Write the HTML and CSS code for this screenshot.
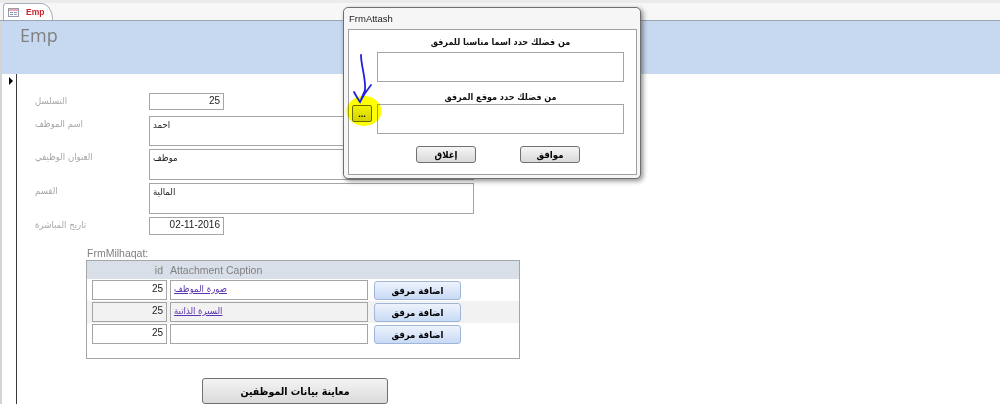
FILE: index.html
```html
<!DOCTYPE html>
<html lang="ar">
<head>
    <meta charset="UTF-8">
    <title>Emp</title>
    <link rel="stylesheet" href="styles.css">
</head>
<body>

    <div class="tabbar">
        <div class="tab">
            <svg class="tab-icon" width="11" height="9" viewBox="0 0 11 9">
                <rect x="0.5" y="0.5" width="10" height="8" fill="#fff" stroke="#9a9aa8"/>
                <rect x="1" y="1" width="9" height="2" fill="#e7a9b8"/>
                <path d="M2 4.5h3M2 6.5h3M6 4.5h3M6 6.5h3" stroke="#8a9ab0"/>
            </svg>
            Emp
        </div>
    </div>

    <div class="frame">
        <div class="form-header">Emp</div>

        <div class="detail">
            <div class="selector"><span class="current"></span></div>

            <div class="content">
                <div class="rows">
                    <div class="row first">
                        <div class="lbl">التسلسل</div>
                        <div class="box num h17">25</div>
                    </div>
                    <div class="row">
                        <div class="lbl">اسم الموظف</div>
                        <div class="box wide h30">احمد</div>
                    </div>
                    <div class="row">
                        <div class="lbl">العنوان الوظيفي</div>
                        <div class="box wide h31">موظف</div>
                    </div>
                    <div class="row">
                        <div class="lbl">القسم</div>
                        <div class="box wide h31">المالية</div>
                    </div>
                    <div class="row">
                        <div class="lbl">تاريخ المباشرة</div>
                        <div class="box num h18">02-11-2016</div>
                    </div>
                </div>

                <div class="sub-label">FrmMilhaqat:</div>
                <div class="subform">
                    <div class="sub-head">
                        <div class="col-id">id</div>
                        <div class="col-cap">Attachment Caption</div>
                    </div>
                    <div class="sub-row">
                        <div class="cell col-id">25</div>
                        <div class="cell col-cap"><a href="#">صورة الموظف</a></div>
                        <button class="add-btn">اضافة مرفق</button>
                    </div>
                    <div class="sub-row alt">
                        <div class="cell col-id">25</div>
                        <div class="cell col-cap"><a href="#">السيرة الذاتية</a></div>
                        <button class="add-btn">اضافة مرفق</button>
                    </div>
                    <div class="sub-row">
                        <div class="cell col-id">25</div>
                        <div class="cell col-cap"></div>
                        <button class="add-btn">اضافة مرفق</button>
                    </div>
                </div>

                <button class="preview-btn">معاينة بيانات الموظفين</button>
            </div>
        </div>
    </div>

    <!-- popup window -->
    <div class="dialog">
        <div class="dialog-title">FrmAttash</div>
        <div class="dialog-client">
            <div class="dlg-label">من فضلك حدد اسما مناسبا للمرفق</div>
            <div class="dlg-box"></div>
            <div class="dlg-label second">من فضلك حدد موقع المرفق</div>
            <button class="browse-btn">...</button>
            <div class="dlg-box flush"></div>
            <div class="dlg-buttons">
                <button class="dlg-btn">إغلاق</button>
                <button class="dlg-btn">موافق</button>
            </div>
        </div>
        <svg class="marker" width="60" height="130" viewBox="0 0 60 130">
            <ellipse cx="20" cy="103" rx="17.5" ry="15" fill="#ffff00"/>
            <path d="M17 47C17 58 22 70 21 82L16 94M10 84C12 88 14 91 16 94C19 88 23 82 27 77" fill="none" stroke="#2020e0" stroke-width="1.8" stroke-linecap="round"/>
        </svg>
    </div>

</body>
</html>
```

FILE: styles.css
```css
body {
    margin: 0;
    padding: 0;
    font-family: "Liberation Sans", Arial, sans-serif;
    background: #fff;
    height: 404px;
    overflow: hidden;
    position: relative;
}
.tabbar {
    height: 17px;
    border-top: 3px solid #ebebeb;
    border-bottom: 1px solid #9aa5b4;
    background: #f7f7f7;
    padding-left: 3px;
    display: flex;
    align-items: flex-end;
}
.tab {
    width: 44px;
    height: 16px;
    background: #fff;
    border: 1px solid #a9b1bc;
    border-bottom: 0;
    border-radius: 3px 12px 0 0 / 3px 16px 0 0;
    display: flex;
    align-items: center;
    gap: 7px;
    padding-left: 4px;
    font-size: 8.5px;
    font-weight: bold;
    color: #c4262e;
}
.frame {
    border-left: 2px solid #d4d4d4;
}
.form-header {
    height: 51px;
    padding: 2px 0 0 18px;
    background: #c6d9f0;
    font-family: "Open Sans", sans-serif;
    font-size: 18px;
    color: #7f7f7f;
}
.detail {
    display: flex;
    height: 330px;
}
.selector {
    width: 14px;
    border-right: 1px solid #3a3a3a;
}
.current {
    display: block;
    width: 0;
    height: 0;
    margin: 3px 0 0 7px;
    border-left: 4px solid #000;
    border-top: 4px solid transparent;
    border-bottom: 4px solid transparent;
}
.content {
    padding: 19px 0 0 18px;
}
.rows {
    display: flex;
    flex-direction: column;
    gap: 3px;
}
.row {
    display: flex;
}
.row.first {
    margin-bottom: 3px;
}
.lbl {
    width: 114px;
    padding-top: 2px;
    font-family: "DejaVu Sans Condensed", "DejaVu Sans", sans-serif;
    font-size: 9.5px;
    color: #a8a8a8;
}
.box {
    box-sizing: border-box;
    border: 1px solid #a5a5a5;
    padding: 1px 3px;
    font-size: 10px;
    color: #222;
    font-family: "Liberation Sans", "DejaVu Sans", sans-serif;
}
.box.num {
    width: 75px;
    text-align: right;
}
.box.wide {
    width: 325px;
    font-family: "DejaVu Sans Condensed", "DejaVu Sans", sans-serif;
    font-size: 9.5px;
    padding-top: 2px;
}
.h17 { height: 17px; }
.h18 { height: 18px; }
.h30 { height: 30px; }
.h31 { height: 31px; }

.sub-label {
    margin: 12px 0 0 52px;
    font-size: 10.5px;
    color: #7f7f7f;
    line-height: 13px;
}
.subform {
    box-sizing: border-box;
    width: 434px;
    height: 99px;
    margin: 0 0 0 51px;
    border: 1px solid #a6a6a6;
}
.sub-head {
    height: 18px;
    background: #d9dfe8;
    display: flex;
    align-items: center;
    padding-left: 5px;
    gap: 3px;
    font-size: 10.5px;
    color: #808080;
}
.sub-head .col-id {
    text-align: right;
    padding-right: 4px;
    box-sizing: border-box;
}
.col-id {
    width: 75px;
}
.col-cap {
    width: 198px;
}
.sub-row {
    height: 22px;
    display: flex;
    align-items: center;
    padding-left: 5px;
    gap: 3px;
}
.sub-row.alt {
    background: #f2f2f2;
}
.cell {
    box-sizing: border-box;
    height: 20px;
    border: 1px solid #a5a5a5;
    background: #fff;
    padding: 2px 3px;
    font-size: 10px;
    color: #222;
}
.sub-row.alt .cell {
    background: #f2f2f2;
}
.cell.col-id {
    text-align: right;
}
.cell a {
    font-family: "DejaVu Sans Condensed", "DejaVu Sans", sans-serif;
    font-size: 9.5px;
    color: #5b34b0;
}
.add-btn {
    box-sizing: border-box;
    width: 87px;
    height: 19px;
    margin-left: 3px;
    padding: 0;
    border: 1px solid #9fb6d8;
    border-radius: 3px;
    background: linear-gradient(#eef3fc, #c8daf4);
    font-family: "DejaVu Sans Condensed", "DejaVu Sans", sans-serif;
    font-size: 9.5px;
    font-weight: bold;
    color: #000;
}
.preview-btn {
    display: block;
    box-sizing: border-box;
    width: 186px;
    height: 26px;
    margin: 19px 0 0 167px;
    padding: 0;
    border: 1px solid #707070;
    border-radius: 3px;
    background: linear-gradient(#f4f4f4, #dadada);
    font-family: "DejaVu Sans Condensed", "DejaVu Sans", sans-serif;
    font-size: 10.5px;
    font-weight: bold;
    color: #000;
}

/* popup */
.dialog {
    position: absolute;
    left: 343px;
    top: 7px;
    box-sizing: border-box;
    width: 298px;
    height: 172px;
    padding: 0 3px 4px 4px;
    border: 1px solid #6f6f6f;
    border-radius: 5px;
    background: #f6f6f6;
    box-shadow: 2px 2px 5px rgba(0,0,0,0.45);
}
.dialog-title {
    height: 21px;
    line-height: 21px;
    padding-left: 1px;
    font-size: 9.5px;
    color: #1e1e1e;
}
.dialog-client {
    box-sizing: border-box;
    height: 146px;
    border: 1px solid #a0a0a0;
    background: #fff;
    padding-top: 6px;
    display: grid;
    grid-template-columns: 28px 247px;
    align-content: start;
}
.dlg-label {
    grid-column: 2;
    text-align: center;
    line-height: 13px;
    font-family: "DejaVu Sans Condensed", "DejaVu Sans", sans-serif;
    font-size: 9px;
    font-weight: bold;
    color: #111;
}
.dlg-label.second {
    margin-top: 9px;
}
.dlg-box {
    grid-column: 2;
    box-sizing: border-box;
    height: 30px;
    margin-top: 3px;
    border: 1px solid #a5a5a5;
}
.dlg-box.flush {
    margin-top: 0;
}
.browse-btn {
    grid-column: 1;
    box-sizing: border-box;
    width: 20px;
    height: 17px;
    margin: 1px 0 0 3px;
    padding: 0;
    border: 1px solid #6a6a6a;
    border-radius: 2px;
    background: linear-gradient(#f2f2f2, #d2d2d2);
    font-size: 9px;
    font-weight: bold;
    line-height: 10px;
}
.dlg-buttons {
    grid-column: 1 / 3;
    display: flex;
    gap: 44px;
    margin: 12px 0 0 67px;
}
.dlg-btn {
    box-sizing: border-box;
    width: 60px;
    height: 17px;
    padding: 0;
    border: 1px solid #707070;
    border-radius: 3px;
    background: linear-gradient(#f5f5f5, #d9d9d9);
    font-family: "DejaVu Sans Condensed", "DejaVu Sans", sans-serif;
    font-size: 9.5px;
    font-weight: bold;
    color: #000;
}
.marker {
    position: absolute;
    left: 0;
    top: 0;
    mix-blend-mode: multiply;
    pointer-events: none;
}
```
